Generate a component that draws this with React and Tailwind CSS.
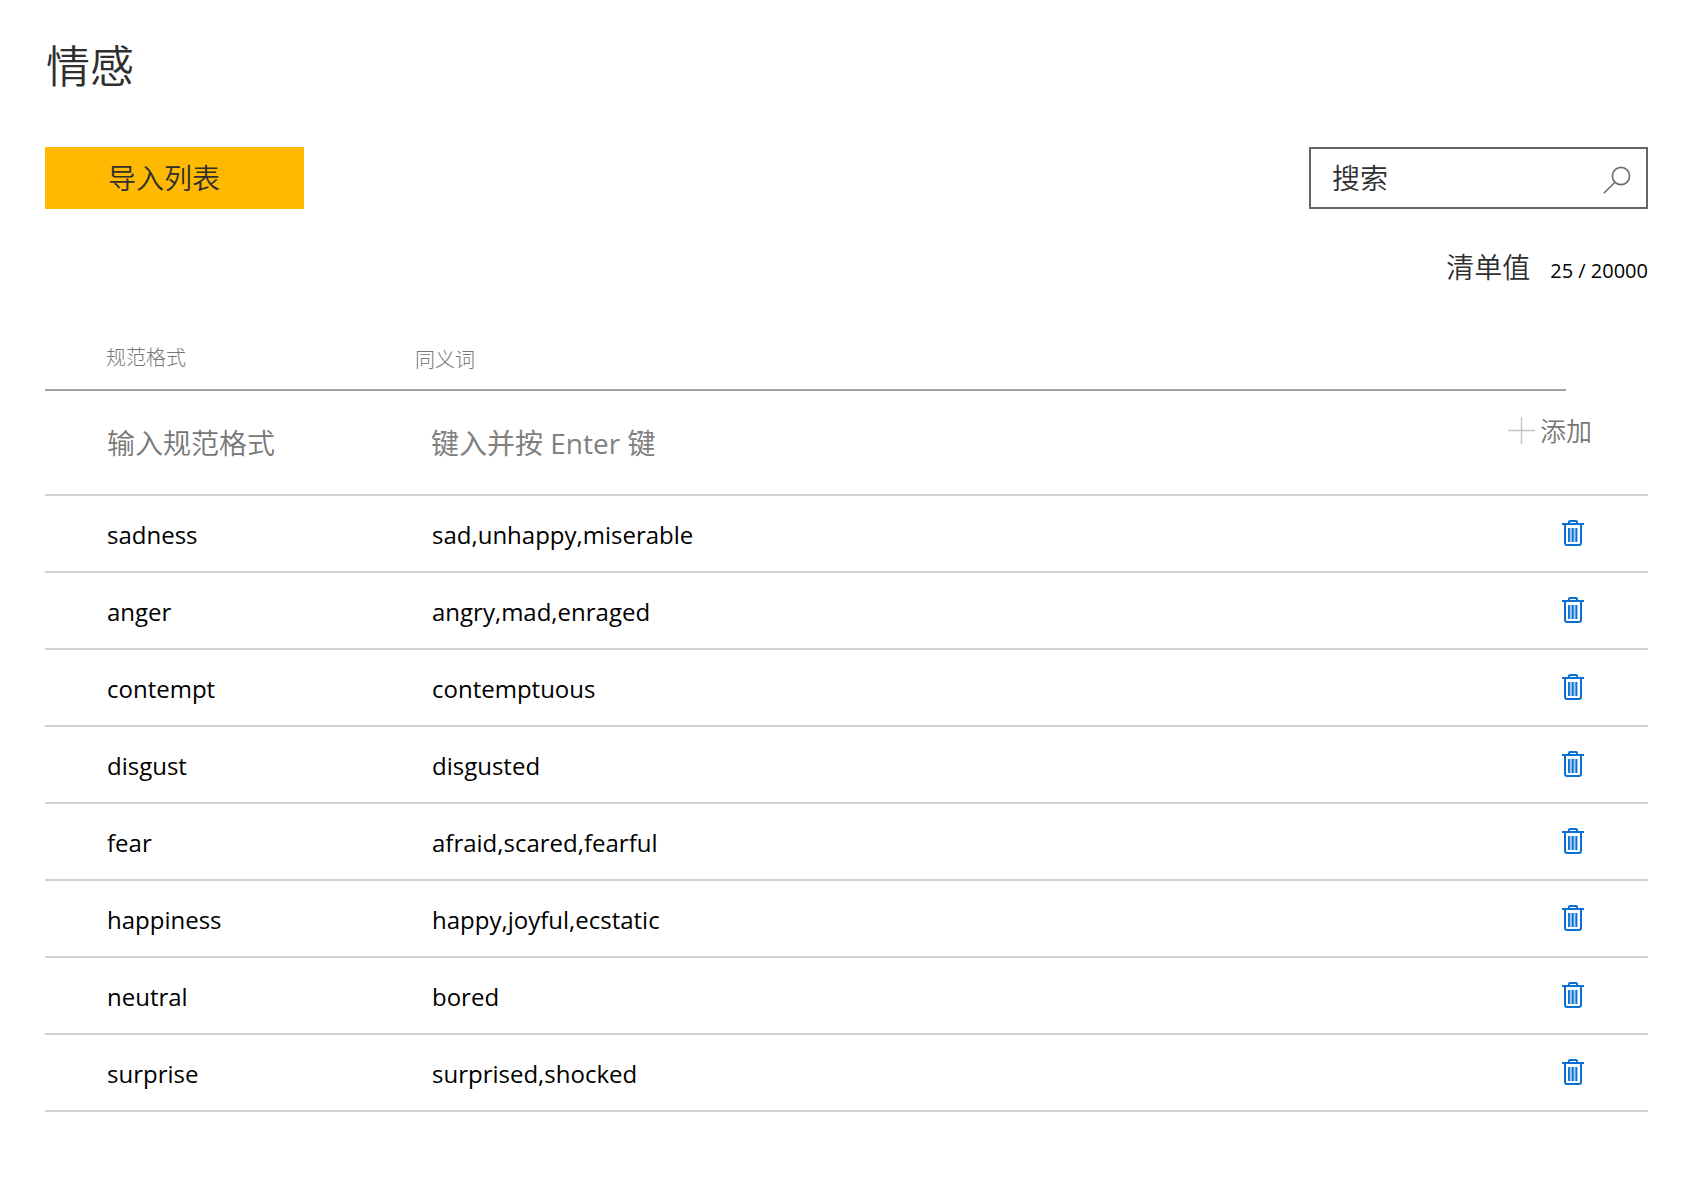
import React from "react";

const rows = [
  ["sadness", "sad,unhappy,miserable"],
  ["anger", "angry,mad,enraged"],
  ["contempt", "contemptuous"],
  ["disgust", "disgusted"],
  ["fear", "afraid,scared,fearful"],
  ["happiness", "happy,joyful,ecstatic"],
  ["neutral", "bored"],
  ["surprise", "surprised,shocked"],
];

function SearchIcon() {
  return (
    <svg viewBox="0 0 28 28" className="mt-1 h-7 w-7" fill="none" stroke="#6b6b6b" strokeWidth="1.6" aria-hidden="true">
      <circle cx="18" cy="10" r="8.6" />
      <path d="M12 16.2 L0.8 27.2" />
    </svg>
  );
}

function PlusIcon() {
  return (
    <svg viewBox="0 0 27 27" className="h-[27px] w-[27px]" fill="none" stroke="#c4c4c4" strokeWidth="1.4" aria-hidden="true">
      <path d="M13.5 0 V27 M0 13.5 H27" />
    </svg>
  );
}

function TrashIcon() {
  return (
    <svg viewBox="0 0 22 26" className="h-[26px] w-[22px]" fill="none" stroke="#0b70d3" aria-hidden="true">
      <path d="M0 4 H22" strokeWidth="2" />
      <path d="M7 4 V2 Q7 1 8 1 H14 Q15 1 15 2 V4" strokeWidth="2" />
      <path d="M3 4 V23 Q3 25 5 25 H17 Q19 25 19 23 V4" strokeWidth="2" />
      <rect x="6" y="8" width="9.4" height="14" fill="#a9d0f4" stroke="none" />
      <path d="M7 8 V22 M10.7 8 V22 M14.4 8 V22" strokeWidth="1.8" />
    </svg>
  );
}

export default function App() {
  return (
    <main className="min-h-screen bg-white pt-[34px] pr-[47px] pb-16 pl-[45px] font-['Open_Sans','Noto_Sans_CJK_SC',sans-serif] text-black">
      <h1 className="pl-px font-['Noto_Sans_CJK_SC',sans-serif] text-[44px] leading-[60px] font-[350] text-[#2f2f2f]">情感</h1>

      <div className="mt-[53px] flex items-center justify-between">
        <button
          type="button"
          className="h-[62px] w-[259px] bg-[#ffb900] pb-0.5 pl-[63px] text-left font-['Noto_Sans_CJK_SC',sans-serif] text-[28px] font-[350] text-[#2f2f2f]"
        >
          导入列表
        </button>
        <label className="flex h-[62px] w-[339px] items-center border-2 border-[#666666] pr-[15px] pl-[21px]">
          <input
            type="search"
            aria-label="搜索"
            placeholder="搜索"
            className="min-w-0 flex-1 bg-transparent pb-0.5 font-['Noto_Sans_CJK_SC',sans-serif] text-[28px] font-[350] outline-none placeholder:text-[#2f2f2f]"
          />
          <SearchIcon />
        </label>
      </div>

      <div className="mt-[39px] flex items-baseline justify-end gap-5 leading-9">
        <span className="font-['Noto_Sans_CJK_SC',sans-serif] text-[28px] font-[350] text-[#2f2f2f]">清单值</span>
        <span className="text-[20px]">25 / 20000</span>
      </div>

      <table className="mt-9 w-full table-fixed border-separate border-spacing-0 text-left">
        <colgroup>
          <col className="w-[370px]" />
          <col />
          <col className="w-[66px]" />
          <col className="w-[82px]" />
        </colgroup>
        <thead className="text-[20px] leading-8 text-[#777777]">
          <tr className="h-[66px]">
            <th className="border-b-2 border-[#a0a0a0] pt-0.5 pl-[61px] font-light">规范格式</th>
            <th className="border-b-2 border-[#a0a0a0] pt-1.5 font-light">同义词</th>
            <td className="border-b-2 border-[#a0a0a0]" />
            <td />
          </tr>
        </thead>
        <tbody>
          <tr className="h-[105px] text-[28px] leading-10">
            <td className="border-b-2 border-[#d0d0d0] pl-[62px]">
              <input
                aria-label="规范格式"
                placeholder="输入规范格式"
                className="w-full font-['Noto_Sans_CJK_SC',sans-serif] font-[350] outline-none placeholder:text-[#777777]"
              />
            </td>
            <td className="border-b-2 border-[#d0d0d0] pl-4">
              <input
                aria-label="同义词"
                placeholder="键入并按 Enter 键"
                className="w-full outline-none placeholder:text-[#808080]"
              />
            </td>
            <td colSpan={2} className="border-b-2 border-[#d0d0d0] pr-14 pb-6">
              <button type="button" className="ml-auto flex items-center gap-[5px] font-['Noto_Sans_CJK_SC',sans-serif] text-[26px] font-[350] whitespace-nowrap text-[#777777]">
                <PlusIcon />
                <span className="pb-0.5">添加</span>
              </button>
            </td>
          </tr>
          {rows.map(([name, synonyms]) => (
            <tr key={name} className="h-[77px] text-[24px] leading-9">
              <td className="border-b-2 border-[#d0d0d0] pt-0.5 pl-[62px]">{name}</td>
              <td className="border-b-2 border-[#d0d0d0] pt-0.5 pl-[17px]">{synonyms}</td>
              <td colSpan={2} className="border-b-2 border-[#d0d0d0] pr-16 pb-0.5">
                <button type="button" aria-label={"删除 " + name} className="ml-auto block">
                  <TrashIcon />
                </button>
              </td>
            </tr>
          ))}
        </tbody>
      </table>
    </main>
  );
}
